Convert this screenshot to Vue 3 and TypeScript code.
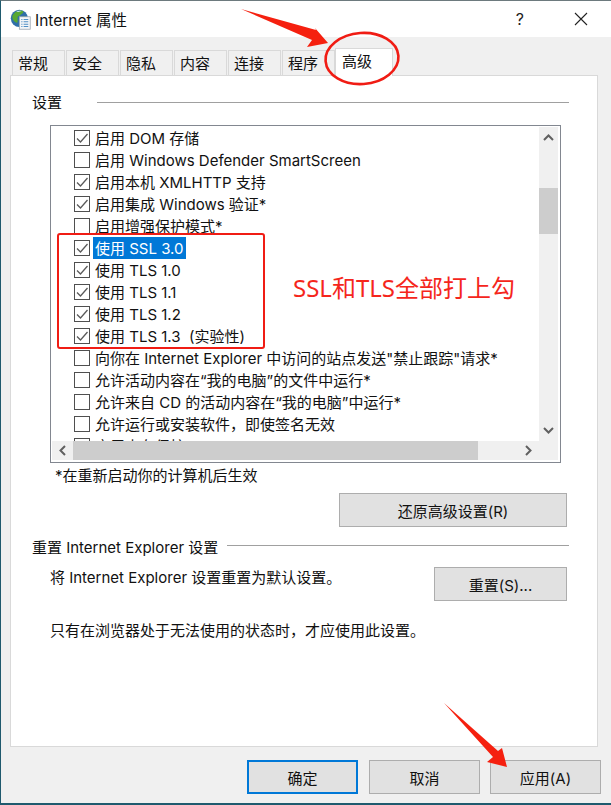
<script setup lang="ts">
interface Row { text: string; on: boolean; sel?: boolean }
const rows: Row[] = [
  { text: '启用 DOM 存储', on: true },
  { text: '启用 Windows Defender SmartScreen', on: false },
  { text: '启用本机 XMLHTTP 支持', on: true },
  { text: '启用集成 Windows 验证*', on: true },
  { text: '启用增强保护模式*', on: false },
  { text: '使用 SSL 3.0', on: true, sel: true },
  { text: '使用 TLS 1.0', on: true },
  { text: '使用 TLS 1.1', on: true },
  { text: '使用 TLS 1.2', on: true },
  { text: '使用 TLS 1.3\u00a0\u00a0(实验性)', on: true },
  { text: '向你在 Internet Explorer 中访问的站点发送"禁止跟踪"请求*', on: false },
  { text: '允许活动内容在“我的电脑”的文件中运行*', on: false },
  { text: '允许来自 CD 的活动内容在“我的电脑”中运行*', on: false },
  { text: '允许运行或安装软件，即使签名无效', on: false },
  { text: '启用内存保护', on: false },
]
const tabs = ['常规', '安全', '隐私', '内容', '连接', '程序']
</script>

<template>
  <div class="window">
    <header class="titlebar">
      <svg class="appicon" width="21" height="21" viewBox="0 0 27 27">
        <circle cx="12" cy="12" r="11" fill="#2f6fa8" />
        <path d="M5 6c3-4 9-5 12-3 1 2-1 3-3 4-1 2-3 1-4 3-1 3 1 5-1 8-3-1-6-4-6-8 0-2 1-3 2-4z" fill="#58a832" />
        <path d="M16 10c3-1 5 0 6 2 0 3-2 6-4 7-2-2-3-6-2-9z" fill="#4d9a2e" />
        <path d="M8 3.500c2-1.200 5-1.500 7-.8-2 1-4 1.300-7 .8z" fill="#bfe3f5" />
        <rect x="12" y="10" width="14" height="16" fill="#f4f6f8" stroke="#98a4ae" />
        <path d="M14.500 13.500h1.500M17.500 13.500h6M14.500 16.500h1.500M17.500 16.500h6M14.500 19.500h1.500M17.500 19.500h6M14.500 22.500h1.500M17.500 22.500h6" stroke="#4f8fc4" stroke-width="1.300" />
      </svg>
      <span class="title">Internet 属性</span>
      <span class="help">?</span>
      <svg class="close" width="14" height="14" viewBox="0 0 14 14">
        <path d="M1 1l12 12M13 1L1 13" stroke="#222" stroke-width="1.100" fill="none" />
      </svg>
    </header>

    <nav class="tabs">
      <div v-for="t in tabs" :key="t" class="tab">{{ t }}</div>
      <div class="tab active">高级</div>
    </nav>

    <section class="panel">
      <div class="legend first"><span>设置</span><i class="rule"></i></div>

      <div class="listbox">
        <div class="viewport">
          <div v-for="r in rows" :key="r.text" class="row">
            <span class="check">
              <svg v-if="r.on" width="14" height="14" viewBox="0 0 14 14">
                <path d="M2 7.500l3.500 3.500L12.500 3" stroke="#5a5a5a" stroke-width="1.300" fill="none" />
              </svg>
            </span>
            <span class="label" :class="{ selected: r.sel }">{{ r.text }}</span>
          </div>
        </div>
        <div class="vbar">
          <svg width="19" height="20" viewBox="0 0 19 20"><path d="M5 13l4.500-4.500L14 13" stroke="#606060" stroke-width="2" fill="none" /></svg>
          <div class="vtrack"><div class="vthumb"></div></div>
          <svg width="19" height="20" viewBox="0 0 19 20"><path d="M5 7l4.500 4.500L14 7" stroke="#606060" stroke-width="2" fill="none" /></svg>
        </div>
        <div class="hbar">
          <svg width="21" height="19" viewBox="0 0 21 19"><path d="M13 5l-4.500 4.500L13 14" stroke="#606060" stroke-width="2" fill="none" /></svg>
          <div class="hthumb"></div>
          <svg class="hend" width="21" height="19" viewBox="0 0 21 19"><path d="M8 5l4.500 4.500L8 14" stroke="#606060" stroke-width="2" fill="none" /></svg>
        </div>
        <div class="corner"></div>
      </div>

      <p class="note">*在重新启动你的计算机后生效</p>
      <div class="right-action"><button class="btn restore">还原高级设置(R)</button></div>

      <div class="legend second"><span>重置 Internet Explorer 设置</span><i class="rule"></i></div>
      <div class="reset-row">
        <span class="reset-text">将 Internet Explorer 设置重置为默认设置。</span>
        <button class="btn reset">重置(S)...</button>
      </div>
      <p class="hint">只有在浏览器处于无法使用的状态时，才应使用此设置。</p>
    </section>

    <footer class="actions">
      <button class="btn act primary">确定</button>
      <button class="btn act">取消</button>
      <button class="btn act">应用(A)</button>
    </footer>

    <div class="redbox"></div>
    <div class="redtext">SSL和TLS全部打上勾</div>
    <svg class="marks" width="611" height="805" viewBox="0 0 611 805">
      <ellipse cx="362" cy="58.500" rx="36.500" ry="25.500" fill="none" stroke="#f01c14" stroke-width="2.600" transform="rotate(-4 362 58.500)" />
      <path d="M241 9L316 30 315 28 328 43 307 47 312 40z" fill="#f5200f" />
      <path d="M444 703L498 751 502 748 507 767 487 762 493 757z" fill="#f5200f" />
    </svg>
  </div>
</template>

<style>
html, body { margin: 0; padding: 0; background: #f0f0f0; }
</style>

<style scoped>
.window {
  position: relative;
  width: 611px;
  height: 805px;
  box-sizing: border-box;
  display: flex;
  flex-direction: column;
  overflow: hidden;
  background: #f0f0f0;
  border-top: 1px solid #6d7a7e;
  border-left: 1px solid #1f5a6e;
  border-bottom: 2px solid #1f5a6e;
  font-family: Inter, "Noto Sans CJK SC", sans-serif;
  font-size: 15px;
  color: #111;
}
.titlebar {
  height: 36px;
  flex: none;
  display: flex;
  align-items: center;
  background: #fff;
  padding-left: 9px;
}
.appicon { flex: none; margin-top: 1px; }
.title { margin-left: 4px; font-size: 15.500px; }
.help { margin-left: auto; font-size: 16px; color: #222; }
.close { margin: 0 23px 0 50px; }

.tabs {
  height: 38px;
  flex: none;
  display: flex;
  align-items: flex-end;
  padding-left: 11px;
}
.tab {
  width: 53px;
  height: 25px;
  margin-right: 1px;
  padding-left: 5px;
  box-sizing: border-box;
  border: 1px solid #d9d9d9;
  border-bottom: none;
  background: #f0f0f0;
  line-height: 25px;
}
.tab.active {
  width: 58px;
  height: 28px;
  margin: 0 0 -1px -1px;
  padding-left: 6px;
  background: #fff;
  line-height: 25px;
  position: relative;
}

.panel {
  width: 588px;
  height: 672px;
  flex: none;
  margin-left: 9px;
  box-sizing: border-box;
  border: 1px solid #d9d9d9;
  background: #fff;
  display: flex;
  flex-direction: column;
}
.legend {
  display: flex;
  align-items: center;
  height: 22px;
  margin-right: 28px;
  padding-left: 21px;
}
.legend.first { margin-top: 15px; }
.legend.first span { margin-top: -2px; }
.legend .rule { flex: 1; height: 1px; background: #a0a0a0; }
.legend.first .rule { margin-left: 35px; }
.legend.second { margin-top: 7px; }
.legend.second span { margin-top: 2px; }
.legend.second .rule { margin-left: 9px; }

.listbox {
  width: 511px;
  height: 338px;
  margin: 12px 0 0 39px;
  box-sizing: border-box;
  border: 1px solid #828790;
  padding: 1px;
  display: grid;
  grid-template-columns: 487px 19px;
  grid-template-rows: 314px 19px;
  background: #fff;
}
.viewport { overflow: hidden; }
.row {
  height: 22px;
  display: flex;
  align-items: center;
  padding-left: 22px;
  white-space: nowrap;
}
.check {
  width: 16px;
  height: 16px;
  flex: none;
  box-sizing: border-box;
  border: 1px solid #4f4f4f;
  display: flex;
  align-items: center;
  justify-content: center;
  background: #fff;
}
.label {
  height: 22px;
  line-height: 24px;
  margin-left: 3px;
  padding: 0 2px;
}
.label.selected { background: #0078d7; color: #fff; }

.vbar, .hbar, .corner { background: #f0f0f0; }
.vbar { display: flex; flex-direction: column; }
.vbar svg, .hbar svg { flex: none; display: block; }
.vtrack { flex: 1; padding-top: 41px; }
.vthumb { height: 46px; background: #cdcdcd; }
.hbar { display: flex; }
.hthumb { width: 405px; background: #cdcdcd; }
.hend { margin-left: auto; }

.note { margin: 2px 0 0 44px; height: 22px; line-height: 22px; }
.right-action { display: flex; justify-content: flex-end; margin: 6px 30px 0 0; }
.btn {
  box-sizing: border-box;
  height: 34px;
  border: 1px solid #adadad;
  background: #e1e1e1;
  color: #111;
  font: inherit;
  padding: 0;
}
.restore { width: 228px; }
.reset-row {
  display: flex;
  align-items: flex-start;
  justify-content: space-between;
  margin: 11px 30px 0 39px;
}
.reset-text { line-height: 22px; }
.reset { width: 133px; }
.hint { margin: 19px 0 0 39px; height: 22px; line-height: 22px; }

.actions {
  flex: 1;
  display: flex;
  align-items: flex-start;
  gap: 10px;
  padding: 13px 10px 0 0;
  justify-content: flex-end;
}
.act { width: 111px; }
.primary { border: 2px solid #0078d7; margin-right: 1px; }

.redbox {
  position: absolute;
  left: 56px;
  top: 232px;
  width: 208px;
  height: 116px;
  box-sizing: border-box;
  border: 2px solid #f01c14;
  border-radius: 3px;
  pointer-events: none;
}
.redtext {
  position: absolute;
  left: 292px;
  top: 270px;
  font-family: "Noto Sans", "Noto Sans CJK SC", sans-serif;
  font-size: 24px;
  line-height: 34px;
  color: #f5261c;
  white-space: nowrap;
}
.marks { position: absolute; left: -1px; top: -1px; pointer-events: none; }
</style>
